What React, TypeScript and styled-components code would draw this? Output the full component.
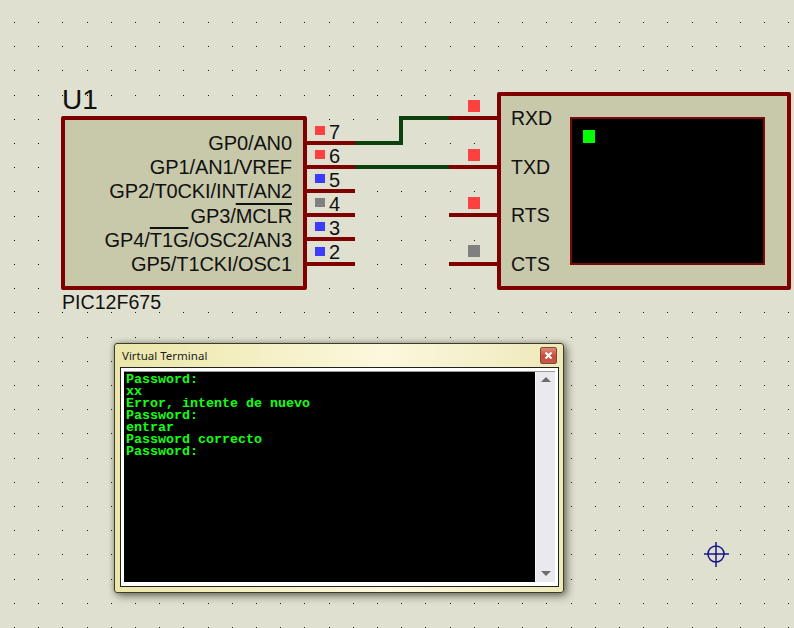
import React from 'react';
import styled, { createGlobalStyle } from 'styled-components';

const GlobalStyle = createGlobalStyle`
  html, body {
    margin: 0;
    padding: 0;
    background: #dfe0d0;
  }
`;

const RED = '#7f0000';
const GREEN = '#0c400c';

const Canvas = styled.div`
  position: relative;
  width: 794px;
  height: 628px;
  overflow: hidden;
  background: #dfe0d0;
  font-family: 'Liberation Sans', Arial, sans-serif;
  color: #111;
`;

const Drawing = styled.svg`
  position: absolute;
  inset: 0;
`;

const Part = styled.div<{ $x: number; $y: number; $w: number; $h: number }>`
  position: absolute;
  left: ${p => p.$x}px;
  top: ${p => p.$y}px;
  width: ${p => p.$w}px;
  height: ${p => p.$h}px;
  box-sizing: border-box;
  background: #c8c8aa;
  border: 4px solid ${RED};
  border-radius: 2px;
`;

const ChipPins = styled.div`
  display: flex;
  flex-direction: column;
  align-items: flex-end;
  padding: 11px 11px 0 0;
`;

const PinName = styled.div`
  height: 24.2px;
  line-height: 24.2px;
  font-size: 20px;
  letter-spacing: -0.1px;
  white-space: nowrap;
`;

const Bar = styled.span`
  text-decoration: overline;
  text-decoration-thickness: 2px;
`;

const Label = styled.div<{ $x: number; $y: number; $size: number }>`
  position: absolute;
  left: ${p => p.$x}px;
  top: ${p => p.$y}px;
  font-size: ${p => p.$size}px;
  line-height: 1;
  white-space: nowrap;
`;

const TerminalPins = styled.div`
  display: flex;
  flex-direction: column;
  gap: 24.6px;
  padding: 10px 0 0 10px;
`;

const TerminalPin = styled.div`
  height: 24px;
  line-height: 24px;
  font-size: 19.5px;
`;

const Screen = styled.div`
  position: absolute;
  left: 69px;
  top: 21px;
  width: 195px;
  height: 148px;
  box-sizing: border-box;
  padding: 11px;
  background: #000;
  border: 2px solid #7a0a0a;
`;

const Led = styled.div`
  width: 12px;
  height: 13px;
  background: #00ff00;
`;

const Window = styled.div`
  position: absolute;
  left: 114px;
  top: 343px;
  width: 450px;
  height: 250px;
  box-sizing: border-box;
  display: flex;
  flex-direction: column;
  padding: 0 4px 5px 5px;
  border: 1px solid #3c3c30;
  border-radius: 3px;
  background: linear-gradient(90deg, #ebe6a8 0%, #f4efc2 30%, #fbf8de 60%, #eee9b8 100%);
  box-shadow: 3px 3px 8px rgba(50, 50, 30, 0.6), 0 0 5px rgba(50, 50, 30, 0.35);
`;

const TitleBar = styled.div`
  height: 23px;
  display: flex;
  align-items: center;
  justify-content: space-between;
  padding: 0 2px 0 2px;
  font-family: 'Noto Sans', 'Liberation Sans', sans-serif;
  font-size: 11.5px;
  color: #1c1c1c;
`;

const CloseButton = styled.div`
  width: 15px;
  height: 15px;
  display: flex;
  align-items: center;
  justify-content: center;
  border: 1px solid #7c4a3c;
  border-radius: 2px;
  background: linear-gradient(180deg, #e08a78 0%, #c9483a 55%, #c65a48 100%);
`;

const Client = styled.div`
  flex: 1;
  display: flex;
  min-height: 0;
  padding: 4px 3px;
  background: #fff;
  border: 1px solid #222;
`;

const Output = styled.pre`
  flex: 1;
  margin: 0;
  padding: 2px 0 0 2px;
  background: #000;
  box-shadow: 0 -1px 0 #9a9a9a;
  color: #14ff14;
  font-family: 'Liberation Mono', monospace;
  font-size: 13.33px;
  font-weight: bold;
  line-height: 12px;
`;

const ScrollBar = styled.div`
  width: 20px;
  display: flex;
  flex-direction: column;
  justify-content: space-between;
  align-items: center;
  padding: 5px 0 6px;
  box-sizing: border-box;
  background: #e9e9ee;
  border-left: 1px solid #f8f8f8;
  box-shadow: 0 -1px 0 #9a9a9a;
`;

const Arrow = styled.div<{ $down?: boolean }>`
  width: 0;
  height: 0;
  border-left: 5px solid transparent;
  border-right: 5px solid transparent;
  ${p =>
    p.$down
      ? 'border-top: 5px solid #6c6c6c;'
      : 'border-bottom: 5px solid #6c6c6c;'}
`;

const gridX = Array.from({ length: 33 }, (_, i) => Math.round(14 + i * 24.2));
const gridY = Array.from({ length: 26 }, (_, i) => Math.round(22 + i * 24.2));

const chipPins = [
  { y: 143, n: '7', c: '#ff4040', led: 126, num: 122 },
  { y: 167, n: '6', c: '#ff4040', led: 150, num: 146 },
  { y: 191, n: '5', c: '#3c3cff', led: 174, num: 170 },
  { y: 215, n: '4', c: '#808080', led: 198, num: 194 },
  { y: 239, n: '3', c: '#3c3cff', led: 222, num: 218 },
  { y: 264, n: '2', c: '#3c3cff', led: 247, num: 242 },
];

const termPins = [
  { y: 118, c: '#ff4040', led: 100 },
  { y: 167, c: '#ff4040', led: 149 },
  { y: 215, c: '#ff4040', led: 197 },
  { y: 264, c: '#808080', led: 245 },
];

const outputText = `Password:
xx
Error, intente de nuevo
Password:
entrar
Password correcto
Password:`;

export default function App() {
  return (
    <Canvas>
      <GlobalStyle />
      <Drawing width={794} height={628}>
        {gridX.map(x =>
          gridY.map(y => <rect key={`${x}-${y}`} x={x} y={y} width={1} height={1} fill="#1a1a1a" />)
        )}
        <path d="M355 143H401V118H449" fill="none" stroke={GREEN} strokeWidth={4} />
        <path d="M355 167H449" fill="none" stroke={GREEN} strokeWidth={4} />
        {chipPins.map(p => (
          <g key={p.n}>
            <line x1={305} y1={p.y} x2={355} y2={p.y} stroke={RED} strokeWidth={4} />
            <rect x={315} y={p.led} width={10} height={9} fill={p.c} />
          </g>
        ))}
        {termPins.map(p => (
          <g key={p.y}>
            <line x1={449} y1={p.y} x2={499} y2={p.y} stroke={RED} strokeWidth={4} />
            <rect x={468} y={p.led} width={12} height={12} fill={p.c} />
          </g>
        ))}
        <g stroke="#14148c" strokeWidth={1.5} fill="none">
          <circle cx={716} cy={554} r={8} />
          <path d="M704 554H729M716 542V567" />
        </g>
      </Drawing>

      <Label $x={62} $y={86} $size={28}>U1</Label>
      <Part $x={61} $y={116} $w={246} $h={174}>
        <ChipPins>
          <PinName>GP0/AN0</PinName>
          <PinName>GP1/AN1/VREF</PinName>
          <PinName>GP2/T0CKI/INT/AN2</PinName>
          <PinName>GP3/<Bar>MCLR</Bar></PinName>
          <PinName>GP4/<Bar>T1G</Bar>/OSC2/AN3</PinName>
          <PinName>GP5/T1CKI/OSC1</PinName>
        </ChipPins>
      </Part>
      {chipPins.map(p => (
        <Label key={p.n} $x={329} $y={p.num} $size={20}>{p.n}</Label>
      ))}
      <Label $x={62} $y={293} $size={19.6}>PIC12F675</Label>

      <Part $x={497} $y={92} $w={294} $h={198}>
        <TerminalPins>
          <TerminalPin>RXD</TerminalPin>
          <TerminalPin>TXD</TerminalPin>
          <TerminalPin>RTS</TerminalPin>
          <TerminalPin>CTS</TerminalPin>
        </TerminalPins>
        <Screen><Led /></Screen>
      </Part>

      <Window>
        <TitleBar>
          <span>Virtual Terminal</span>
          <CloseButton>
            <svg width="9" height="9" viewBox="0 0 9 9">
              <path d="M1.5 1.5L7.5 7.5M7.5 1.5L1.5 7.5" stroke="#fff" strokeWidth="2.2" />
            </svg>
          </CloseButton>
        </TitleBar>
        <Client>
          <Output>{outputText}</Output>
          <ScrollBar>
            <Arrow />
            <Arrow $down />
          </ScrollBar>
        </Client>
      </Window>
    </Canvas>
  );
}
